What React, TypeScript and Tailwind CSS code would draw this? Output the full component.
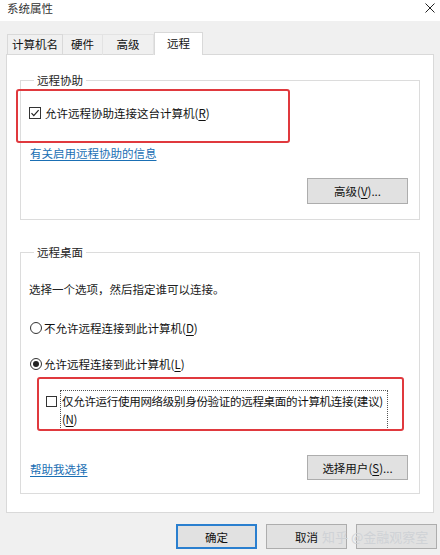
export default function App() {
  const font = { fontFamily: '"Noto Sans CJK SC", "Noto Sans", sans-serif' };

  const Key = ({ k }: { k: string }) => (
    <span>
      (<span className="underline underline-offset-2">{k}</span>)
    </span>
  );

  const Radio = ({ on }: { on?: boolean }) => (
    <span className="w-[12px] h-[12px] rounded-full border border-[#333] bg-white flex items-center justify-center shrink-0">
      {on && <span className="w-[6px] h-[6px] rounded-full bg-[#222]"></span>}
    </span>
  );

  return (
    <div
      className="relative w-[440px] h-[555px] bg-[#f0f0f0] text-[11.5px] leading-[16px] text-[#111] overflow-hidden"
      style={font}
    >
      {/* Title bar */}
      <div className="h-[21px] bg-white flex items-start justify-between pl-[7px] pr-[5px]">
        <span className="text-[#333]">系统属性</span>
        <svg className="w-[10px] h-[10px] mt-[3px]" viewBox="0 0 10 10" fill="none" stroke="#222" strokeWidth={1}>
          <path d="M0.5 0.5l9 9M9.5 0.5l-9 9" />
        </svg>
      </div>

      {/* Tabs */}
      <div className="mt-[11px] pl-[7px] flex items-end h-[23px] relative z-10 -mb-px">
        <div className="h-[21px] w-[56px] border border-b-0 border-[#d9d9d9] flex items-center justify-center pb-[2px]">
          计算机名
        </div>
        <div className="h-[21px] w-[40px] border border-l-0 border-b-0 border-[#e3e3e3] flex items-center justify-center pb-[2px]">
          硬件
        </div>
        <div className="h-[21px] w-[51px] border border-l-0 border-b-0 border-[#e3e3e3] flex items-center justify-center pb-[2px]">
          高级
        </div>
        <div className="h-[23px] w-[49px] bg-white border border-b-0 border-[#d9d9d9] flex items-center justify-center pb-[3px]">
          远程
        </div>
      </div>

      {/* Panel */}
      <div className="mx-[6px] h-[459px] bg-white border border-[#d9d9d9] px-[13px]">
        {/* Remote assistance */}
        <fieldset className="mt-[17px] border border-[#dcdcdc] pl-[8px] pr-[11px] pb-[15px]">
          <legend className="ml-[5px] px-[3px] h-[16px] text-[#222]">远程协助</legend>
          <div className="mt-[17px] flex items-center gap-[4px]">
            <span className="w-[12px] h-[12px] border border-[#333] bg-white flex items-center justify-center shrink-0">
              <svg className="w-[10px] h-[10px]" viewBox="0 0 10 10" fill="none" stroke="#222" strokeWidth={1.2}>
                <path d="M1.5 5.2l2.3 2.4 4.8-5.4" />
              </svg>
            </span>
            <span>
              允许远程协助连接这台计算机
              <Key k="R" />
            </span>
          </div>
          <div className="mt-[24px] pl-[1px]">
            <span className="text-[#1a6fb4] underline underline-offset-2">有关启用远程协助的信息</span>
          </div>
          <div className="mt-[17px] flex justify-end">
            <button className="w-[101px] h-[26px] bg-[#e1e1e1] border border-[#adadad] flex items-center justify-center">
              高级
              <Key k="V" />
              ...
            </button>
          </div>
        </fieldset>

        {/* Remote desktop */}
        <fieldset className="mt-[24px] border border-[#dcdcdc] pl-[8px] pr-[11px] pb-[13px]">
          <legend className="ml-[5px] px-[3px] h-[16px] text-[#222]">远程桌面</legend>
          <div className="mt-[21px] text-[#222]">选择一个选项，然后指定谁可以连接。</div>
          <div className="mt-[23px] flex items-center gap-[2px] pl-[1px]">
            <Radio />
            <span>
              不允许远程连接到此计算机
              <Key k="D" />
            </span>
          </div>
          <div className="mt-[20px] flex items-center gap-[2px] pl-[1px]">
            <Radio on />
            <span>
              允许远程连接到此计算机
              <Key k="L" />
            </span>
          </div>
          <div className="mt-[18px] flex items-start pl-[17px]">
            <span className="mt-[6px] w-[11px] h-[11px] border border-[#333] bg-white shrink-0"></span>
            <div className="ml-[3px] w-[328px] border border-dotted border-[#555] pl-[1px] py-[1px] leading-[18px] whitespace-nowrap tracking-[-0.3px]">
              仅允许运行使用网络级别身份验证的远程桌面的计算机连接(建议)
              <br />
              <Key k="N" />
            </div>
          </div>
          <div className="mt-[25px] flex items-center justify-between">
            <span className="pl-[1px] text-[#1a6fb4] underline underline-offset-2 mt-[2px]">帮助我选择</span>
            <button className="w-[101px] h-[25px] bg-[#e1e1e1] border border-[#adadad] flex items-center justify-center">
              选择用户
              <Key k="S" />
              ...
            </button>
          </div>
        </fieldset>
      </div>

      {/* Bottom buttons */}
      <div className="mt-[11px] flex justify-end gap-[9px] pr-[3px]">
        <button className="w-[81px] h-[25px] bg-[#e1e1e1] border-2 border-[#2a7fcf] flex items-center justify-center">
          确定
        </button>
        <button className="w-[81px] h-[25px] bg-[#e1e1e1] border border-[#adadad] flex items-center justify-center">
          取消
        </button>
        <button className="w-[81px] h-[25px] bg-[#e1e1e1] border border-[#adadad]"></button>
      </div>

      {/* Red highlight boxes */}
      <div className="absolute left-[16px] top-[89px] w-[274px] h-[54px] border-2 border-[#e0393e] rounded-[3px]"></div>
      <div className="absolute left-[37px] top-[377px] w-[367px] h-[54px] border-2 border-[#e0393e] rounded-[3px]"></div>

      {/* Watermark */}
      <div className="absolute left-[322px] top-[528px] text-[13px] leading-[18px] text-[#cfd2d6] whitespace-nowrap">
        知乎 @金融观察室
      </div>
    </div>
  );
}
